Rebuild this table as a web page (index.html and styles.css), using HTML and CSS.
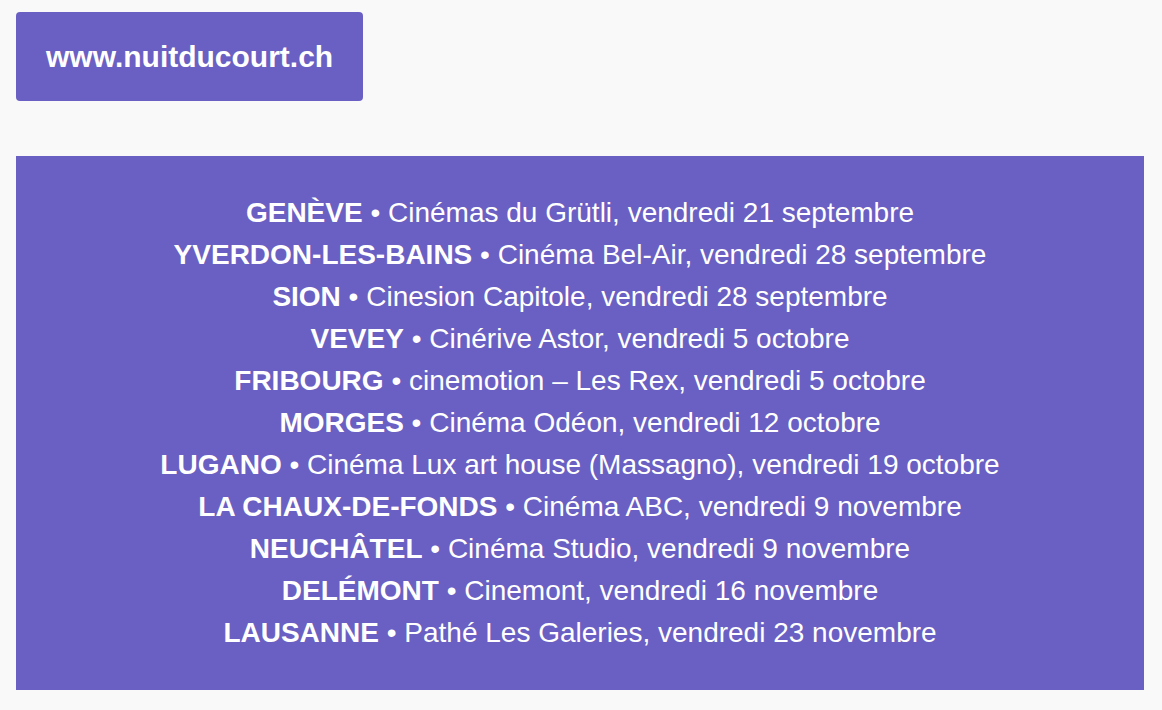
FILE: index.html
```html
<!DOCTYPE html>
<html lang="fr">
<head>
<meta charset="utf-8">
<title>Nuit du court</title>
<link rel="stylesheet" href="styles.css">
</head>
<body>
<div class="page">
  <div class="top">
    <a class="site-btn" href="#">www.nuitducourt.ch</a>
  </div>
  <div class="dates">
    <p><b>GENÈVE</b> • Cinémas du Grütli, vendredi 21 septembre</p>
    <p><b>YVERDON-LES-BAINS</b> • Cinéma Bel-Air, vendredi 28 septembre</p>
    <p><b>SION</b> • Cinesion Capitole, vendredi 28 septembre</p>
    <p><b>VEVEY</b> • Cinérive Astor, vendredi 5 octobre</p>
    <p><b>FRIBOURG</b> • cinemotion – Les Rex, vendredi 5 octobre</p>
    <p><b>MORGES</b> • Cinéma Odéon, vendredi 12 octobre</p>
    <p><b>LUGANO</b> • Cinéma Lux art house (Massagno), vendredi 19 octobre</p>
    <p><b>LA CHAUX-DE-FONDS</b> • Cinéma ABC, vendredi 9 novembre</p>
    <p><b>NEUCHÂTEL</b> • Cinéma Studio, vendredi 9 novembre</p>
    <p><b>DELÉMONT</b> • Cinemont, vendredi 16 novembre</p>
    <p><b>LAUSANNE</b> • Pathé Les Galeries, vendredi 23 novembre</p>
  </div>
</div>
</body>
</html>
```

FILE: styles.css
```css
html, body {
  margin: 0;
  padding: 0;
  background: #f9f9f9;
  font-family: "Liberation Sans", Arial, sans-serif;
}
.page {
  padding: 12px 18px 0 16px;
}
.top {
  display: flex;
}
.site-btn {
  display: block;
  background: #6a5fc3;
  color: #fff;
  text-decoration: none;
  font-weight: bold;
  font-size: 30px;
  line-height: 30px;
  padding: 30px 30px 29px;
  border-radius: 4px;
}
.dates {
  margin-top: 55px;
  background: #6a5fc3;
  color: #fff;
  text-align: center;
  padding: 36px 0;
  font-size: 28px;
}
.dates p {
  margin: 0;
  line-height: 42px;
}
.dates b {
  font-weight: bold;
}
```
